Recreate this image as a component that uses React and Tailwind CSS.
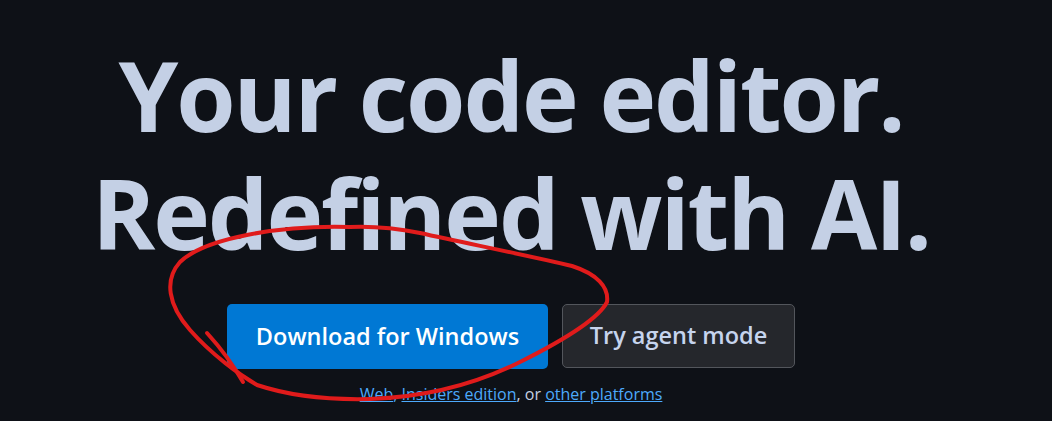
import React from "react";

function Scribble() {
  return (
    <svg
      className="pointer-events-none absolute left-0 top-0"
      width="1052"
      height="421"
      viewBox="0 0 1052 421"
      fill="none"
    >
      <path
        d="M350 227 C 280 225, 205 238, 180 262 C 164 280, 168 305, 190 330 C 212 355, 240 375, 257 385 C 290 396, 330 400, 370 399 C 430 397, 480 382, 520 362 C 560 342, 598 320, 607 302 C 609 287, 597 274, 572 266 C 530 256, 470 244, 420 233 C 395 228, 372 226, 350 227"
        stroke="#e01b1b"
        strokeWidth="4"
        strokeLinecap="round"
      />
      <path d="M207 333 Q 228 356, 243 382" stroke="#e01b1b" strokeWidth="4" strokeLinecap="round" />
    </svg>
  );
}

export default function App() {
  return (
    <div className="relative h-[421px] w-[1052px] overflow-hidden bg-[#0e1117] font-['Open_Sans',sans-serif]">
      <div className="flex flex-col items-center pr-[30px] pt-[36px]">
        <h1 className="text-center text-[96px] font-bold leading-[118px] tracking-[-0.022em] text-[#c4d0e5]">
          Your code editor.
          <br />
          Redefined with AI.
        </h1>
        <div className="mt-[32px] flex gap-[14px]">
          <button className="h-[65px] w-[321px] rounded-[5px] bg-[#0078d4] text-[23.5px] font-semibold text-white">
            Download for Windows
          </button>
          <button className="h-[64px] w-[233px] rounded-[5px] border border-[#53565c] bg-[#25272c] text-[23.5px] font-semibold text-[#c6d4ee]">
            Try agent mode
          </button>
        </div>
        <p className="mt-[13px] text-[16px] leading-[24px] text-[#c5d0e3]">
          <a className="text-[#4daafc] underline">Web</a>
          <span className="text-[#4daafc]">, </span>
          <a className="text-[#4daafc] underline">Insiders edition</a>, or{" "}
          <a className="text-[#4daafc] underline">other platforms</a>
        </p>
      </div>
      <Scribble />
    </div>
  );
}
